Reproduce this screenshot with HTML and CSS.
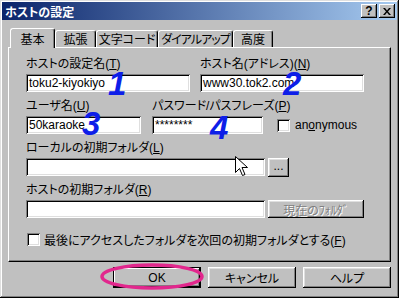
FILE: index.html
```html
<!DOCTYPE html>
<html>
<head>
	<title>ホストの設定</title>
	<meta charset="utf-8">
	<link rel="stylesheet" href="styles.css">
</head>
<body>

	<div class="window">
		<div class="titlebar">
			<span class="title">ホストの設定</span>
			<span class="tbtn">?</span>
			<span class="tbtn">
				<svg width="8" height="7" viewBox="0 0 8 7"><path d="M0 0h2l2 2.5 2-2.5h2l-3 3.5 3 3.5h-2l-2-2.5-2 2.5h-2l3-3.5z" fill="#000"/></svg>
			</span>
		</div>

		<div class="body">
			<div class="tabs">
				<div class="tab active tab-kihon">基本</div>
				<div class="tab tab-kakucho">拡張</div>
				<div class="tab tab-moji">文字コード</div>
				<div class="tab tab-dial">ダイアルアップ</div>
				<div class="tab tab-kodo">高度</div>
			</div>

			<div class="panel">
				<div class="row row-first">
					<div class="field field-name">
						<label>ホストの設定名(<u>T</u>)</label>
						<div class="input">toku2-kiyokiyo</div>
					</div>
					<div class="field field-host">
						<label>ホスト名(アドレス)(<u>N</u>)</label>
						<div class="input">www30.tok2.com</div>
					</div>
				</div>

				<div class="row row-user">
					<div class="field field-user">
						<label>ユーザ名(<u>U</u>)</label>
						<div class="input">50karaoke</div>
					</div>
					<div class="field field-pass">
						<label>パスワード/パスフレーズ(<u>P</u>)</label>
						<div class="input">********</div>
					</div>
					<div class="anon">
						<span class="check"></span>
						<span>an<u>o</u>nymous</span>
					</div>
				</div>

				<div class="row row-local">
					<div class="field">
						<label>ローカルの初期フォルダ(<u>L</u>)</label>
						<div class="line">
							<div class="input input-wide"></div>
							<div class="btn btn-dots">...</div>
						</div>
					</div>
				</div>

				<div class="row row-remote">
					<div class="field">
						<label>ホストの初期フォルダ(<u>R</u>)</label>
						<div class="line">
							<div class="input input-wide"></div>
							<div class="btn btn-current disabled">現在のﾌｫﾙﾀﾞ</div>
						</div>
					</div>
				</div>

				<div class="row row-last">
					<span class="check"></span>
					<span class="last-text">最後にアクセスしたフォルダを次回の初期フォルダとする(<u>F</u>)</span>
				</div>
			</div>

			<div class="buttons">
				<div class="btn btn-big default">OK</div>
				<div class="btn btn-big">キャンセル</div>
				<div class="btn btn-big">ヘルプ</div>
			</div>
		</div>

		<span class="num num-1">1</span>
		<span class="num num-2">2</span>
		<span class="num num-3">3</span>
		<span class="num num-4">4</span>

		<svg class="ring" width="104" height="27" viewBox="0 0 104 27">
			<ellipse cx="52" cy="13.5" rx="50" ry="11.5" fill="none" stroke="#e2278d" stroke-width="3.5"/>
		</svg>

		<svg class="cursor" width="13" height="21" viewBox="0 0 13 21">
			<path d="M0.5 0.5v16l4-4 3 7 2.5-1-3-7h5.5z" fill="#fff" stroke="#000" stroke-width="1"/>
		</svg>
	</div>

</body>
</html>
```

FILE: styles.css
```css
* {
	box-sizing: border-box;
}
body {
	margin: 0;
	background-color: #c0c0c0;
	font-family: "Liberation Sans", "Noto Sans CJK JP", sans-serif;
	font-size: 12px;
	color: #000;
	font-feature-settings: "palt";
}
u {
	text-decoration: underline;
}

div.window {
	position: relative;
	width: 399px;
	height: 298px;
	padding: 2px;
	box-shadow: inset -1px -1px #000, inset 1px 1px #dfdfdf, inset -2px -2px #808080, inset 2px 2px #fff;
}

div.titlebar {
	height: 18px;
	display: flex;
	align-items: center;
	padding: 0 2px 0 3px;
	background: linear-gradient(to right, #0a246a, #a6caf0);
	color: #fff;
	font-weight: bold;
}
.title {
	flex: 1;
}
.tbtn {
	width: 16px;
	height: 14px;
	display: flex;
	align-items: center;
	justify-content: center;
	background-color: #c0c0c0;
	color: #000;
	font-family: "Liberation Sans", sans-serif;
	font-size: 12px;
	font-weight: bold;
	box-shadow: inset -1px -1px #000, inset 1px 1px #fff, inset -2px -2px #808080;
}
.tbtn + .tbtn {
	margin-left: 2px;
}

div.body {
	padding: 8px 6px 0;
}

/* tabs */
div.tabs {
	position: relative;
	z-index: 1;
	display: flex;
	align-items: flex-end;
	height: 19px;
	padding-left: 2px;
}
div.tab {
	height: 17px;
	padding-top: 2px;
	line-height: 14px;
	text-align: center;
	white-space: nowrap;
	background-color: #c0c0c0;
	border-top: 1px solid #fff;
	border-left: 1px solid #fff;
	border-right: 1px solid #000;
	border-radius: 3px 3px 0 0;
	box-shadow: inset -1px 0 #808080;
}
div.tab.active {
	height: 20px;
	padding-top: 4px;
	margin-bottom: -1px;
}
.tab-kihon { width: 45px; }
.tab-kakucho { width: 41px; }
.tab-moji { width: 62px; }
.tab-dial { width: 75px; letter-spacing: -1px; }
.tab-kodo { width: 40px; }

/* panel */
div.panel {
	height: 215px;
	padding: 9px 0 0 17px;
	border: 1px solid;
	border-color: #fff #000 #000 #fff;
	box-shadow: inset -1px -1px #808080;
}
div.row {
	display: flex;
}
div.field {
	display: flex;
	flex-direction: column;
}
div.field label {
	height: 14px;
	line-height: 14px;
	margin-bottom: 3px;
	white-space: nowrap;
}
.row-first label {
	margin-bottom: 4px;
}
.row-user {
	margin-top: 7px;
	align-items: flex-end;
}
.row-local {
	margin-top: 7px;
}
.row-remote {
	margin-top: 6px;
}
.row-last {
	margin-top: 14px;
	height: 15px;
	align-items: center;
	padding-left: 1px;
}

div.input {
	height: 18px;
	padding: 0 3px;
	line-height: 18px;
	white-space: nowrap;
	overflow: hidden;
	background-color: #fff;
	box-shadow: inset 1px 1px #808080, inset -1px -1px #fff, inset 2px 2px #000, inset -2px -2px #dfdfdf;
}
.field-name { width: 164px; }
.field-host { width: 164px; margin-left: 10px; }
.field-user { width: 115px; }
.field-pass { width: 111px; margin-left: 11px; }
.input-wide { width: 239px; }

div.line {
	display: flex;
	align-items: flex-start;
}

.check {
	display: inline-block;
	width: 13px;
	height: 13px;
	flex: none;
	background-color: #fff;
	box-shadow: inset 1px 1px #808080, inset -1px -1px #fff, inset 2px 2px #000, inset -2px -2px #dfdfdf;
}
div.anon {
	display: flex;
	align-items: center;
	gap: 5px;
	height: 18px;
	margin-left: 14px;
}
.last-text {
	margin-left: 4px;
	white-space: nowrap;
}

/* buttons */
div.btn {
	display: flex;
	align-items: center;
	justify-content: center;
	background-color: #c0c0c0;
	white-space: nowrap;
	box-shadow: inset -1px -1px #000, inset 1px 1px #fff, inset -2px -2px #808080, inset 2px 2px #dfdfdf;
}
.btn-dots {
	width: 21px;
	height: 19px;
	margin-left: 3px;
	padding-bottom: 3px;
}
.btn-current {
	width: 96px;
	height: 18px;
	margin-left: 3px;
}
div.btn.disabled {
	color: #808080;
	text-shadow: 1px 1px #fff;
}
div.buttons {
	display: flex;
	justify-content: flex-end;
	gap: 7px;
	margin-top: 5px;
}
.btn-big {
	width: 88px;
	height: 21px;
}
div.btn.default {
	box-shadow: inset 0 0 0 1px #000, inset -2px -2px #000, inset 2px 2px #fff, inset -3px -3px #808080;
}

/* annotations drawn over the dialog */
.num {
	position: absolute;
	font-family: "Liberation Sans", sans-serif;
	font-style: italic;
	font-weight: bold;
	font-size: 33px;
	line-height: 33px;
	color: #0d1ee8;
}
.num-1 { left: 108px; top: 67px; }
.num-2 { left: 283px; top: 67px; }
.num-3 { left: 82px; top: 107px; }
.num-4 { left: 210px; top: 111px; }

.ring {
	position: absolute;
	left: 100px;
	top: 263px;
}
.cursor {
	position: absolute;
	left: 235px;
	top: 156px;
}
```
